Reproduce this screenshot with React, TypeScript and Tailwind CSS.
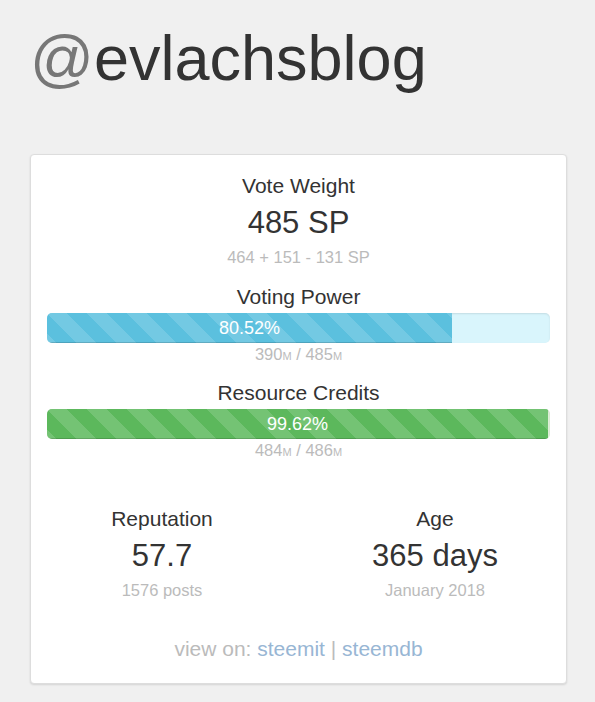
import React from 'react';

interface BarProps {
  percent: number;
  fill: string;
  track: string;
}

const stripes =
  'bg-[linear-gradient(45deg,rgba(255,255,255,.15)_25%,transparent_25%,transparent_50%,rgba(255,255,255,.15)_50%,rgba(255,255,255,.15)_75%,transparent_75%,transparent)] bg-[length:40px_40px]';

const Bar: React.FC<BarProps> = ({ percent, fill, track }) => (
  <div className={`mt-[3px] h-[30px] w-full overflow-hidden rounded-[5px] ${track} shadow-[inset_0_1px_2px_rgba(0,0,0,0.1)]`}>
    <div
      className={`flex h-full items-center justify-center ${fill} ${stripes} shadow-[inset_0_-1px_0_rgba(0,0,0,0.15)] text-[18px] text-white`}
      style={{ width: `${percent}%` }}
    >
      {percent.toFixed(2)}%
    </div>
  </div>
);

const Ratio: React.FC<{ a: number; b: number }> = ({ a, b }) => (
  <div className="text-[16.5px] leading-[22px] text-[#bbbbbb]">
    {a}
    <span className="text-[11px]">M</span> / {b}
    <span className="text-[11px]">M</span>
  </div>
);

const Stat: React.FC<{ label: string; value: string; sub: string }> = ({ label, value, sub }) => (
  <div className="w-[200px] text-center">
    <div className="text-[21px] leading-[24px] text-[#333333]">{label}</div>
    <div className="text-[31px] leading-[50px] text-[#333333]">{value}</div>
    <div className="text-[16.5px] leading-[18px] text-[#bbbbbb]">{sub}</div>
  </div>
);

export default function App() {
  return (
    <div className="min-h-[702px] bg-[#f0f0f0] px-[30px] pt-[27px] pb-[18px] font-['Liberation_Sans',Arial,sans-serif]">
      <h1 className="text-[63px] leading-[63px] text-[#333333]">
        <span className="text-[#777777]">@</span>evlachsblog
      </h1>

      <div className="mt-[64px] w-[537px] rounded-[4px] border border-[#dddddd] bg-white px-[16px] pt-[19px] pb-[21px] text-center shadow-[0_1px_2px_rgba(0,0,0,0.12)]">
        <div className="text-[21px] leading-[24px] text-[#333333]">Vote Weight</div>
        <div className="text-[31px] leading-[50px] text-[#333333]">485 SP</div>
        <div className="text-[16.5px] leading-[18px] text-[#bbbbbb]">464 + 151 - 131 SP</div>

        <div className="mt-[18px] text-[21px] leading-[26px] text-[#333333]">Voting Power</div>
        <Bar percent={80.52} fill="bg-[#5bc0de]" track="bg-[#d9f5fc]" />
        <Ratio a={390} b={485} />

        <div className="mt-[13px] text-[21px] leading-[26px] text-[#333333]">Resource Credits</div>
        <Bar percent={99.62} fill="bg-[#5cb85c]" track="bg-[#dff0d8]" />
        <Ratio a={484} b={486} />

        <div className="mt-[44px] flex justify-center gap-[73px]">
          <Stat label="Reputation" value="57.7" sub="1576 posts" />
          <Stat label="Age" value="365 days" sub="January 2018" />
        </div>

        <div className="mt-[37px] text-[21px] leading-[26px] text-[#bbbbbb]">
          view on: <a className="text-[#98b6d4]">steemit</a> | <a className="text-[#98b6d4]">steemdb</a>
        </div>
      </div>
    </div>
  );
}
